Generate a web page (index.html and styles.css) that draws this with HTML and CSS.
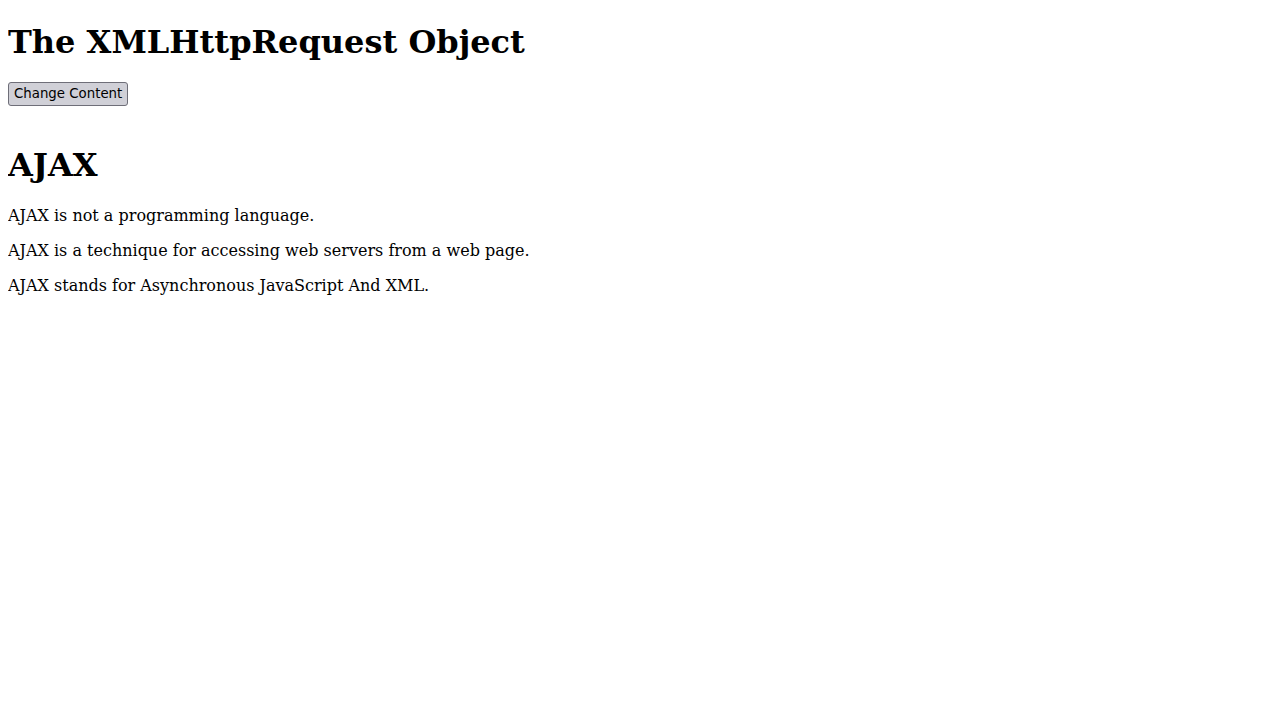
FILE: index.html
```html
<!DOCTYPE html>
<html>
<head>
<meta charset="utf-8">
<title>The XMLHttpRequest Object</title>
<link rel="stylesheet" href="styles.css">
</head>
<body class="page">
<h1 class="title">The XMLHttpRequest Object</h1>
<button type="button" class="btn">Change Content</button>
<div class="demo">
<h2 class="subtitle">AJAX</h2>
<p class="text">AJAX is not a programming language.</p>
<p class="text">AJAX is a technique for accessing web servers from a web page.</p>
<p class="text">AJAX stands for Asynchronous JavaScript And XML.</p>
</div>
</body>
</html>
```
FILE: styles.css
```css
.page {
  margin: 8px;
  font-family: "DejaVu Serif", serif;
  font-size: 16px;
  color: #000;
  background: #fff;
}
.title {
  font-size: 32px;
  font-weight: bold;
  margin: 14.5px 0 21.44px;
}
.btn {
  font-family: "DejaVu Sans", sans-serif;
  font-size: 13.333px;
  color: #000;
  background: #d0d0d7;
  border: 1px solid #6e6e78;
  border-radius: 3px;
  padding: 3px 5px 4px;
  line-height: normal;
}
.subtitle {
  font-size: 32px;
  font-weight: bold;
  margin: 40px 0 22.5px;
}
.text {
  margin: 16px 0;
}
```
